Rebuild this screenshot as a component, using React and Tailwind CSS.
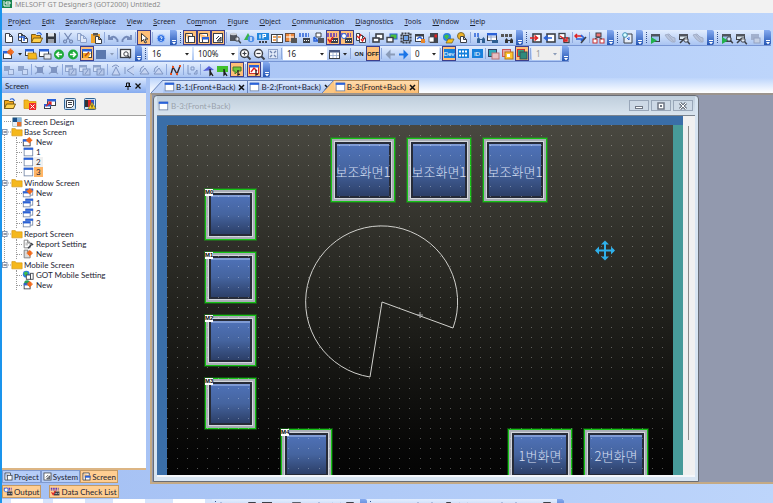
import { useState } from "react";
import clsx from "clsx";

const INK = "#3c4048";
const BLUE = "#2a62d8";
const MUTE = "#8ea3cb";

// All glyphs are drawn on a 14x14 grid
const Win = ({ x = 2, y = 3, w = 9, h = 8, c = INK, t = BLUE, f = "#fff" }) => (
  <>
    <rect x={x + 0.5} y={y + 0.5} width={w - 1} height={h - 1} fill={f} stroke={c} />
    <rect x={x} y={y} width={w} height="2.5" fill={t} />
  </>
);

const Page = ({ x = 3, y = 2, w = 8, h = 10, c = INK, f = "#fff" }) => (
  <path
    d={`M${x + 0.5} ${y + 0.5}h${w - 4}l3 3v${h - 4}h${1 - w}z M${x + w - 3.5} ${y + 0.5}v3h3`}
    fill={f}
    stroke={c}
  />
);

const Star = ({ x = 9, y = 4 }) => (
  <path
    d={`M${x} ${y - 3.5}V${y + 3.5}M${x - 3.5} ${y}H${x + 3.5}M${x - 2} ${y - 2}l4 4M${x + 2} ${y - 2}l-4 4`}
    stroke="#f26a1b"
    strokeWidth="1.6"
  />
);

const Folder = ({ y = 3 }) => (
  <path d={`M1 ${y}h4l1 1.5h7v7H1z`} fill="#f5b81c" stroke="#cf8f0c" strokeWidth=".7" />
);

const Boxes = ({ c = MUTE }) => (
  <>
    <rect x="2" y="3" width="6" height="5" fill={c} />
    <rect x="6.5" y="6.5" width="5" height="5" fill="#c9d9f6" stroke={c} />
  </>
);

const Lens = ({ x = 9, y = 8, c = INK }) => (
  <>
    <circle cx={x} cy={y} r="2.2" fill="#fff" fillOpacity=".6" stroke={c} />
    <path d={`M${x + 1.6} ${y + 1.6}l2.2 2.6`} stroke={c} strokeWidth="1.5" />
  </>
);

const Chip = ({ c = BLUE, b = INK }) => (
  <>
    <path d="M1 3h10M1 5h10" stroke={c} strokeWidth="1.5" strokeDasharray="2 1" />
    <rect x="5" y="7" width="7" height="5" fill={b} />
    <path d="M6 9.500h5" stroke="#fff" strokeDasharray="1 1" />
  </>
);

const glyphs = {
  page: <Page />,
  pageCopy: (
    <>
      <Page x={2} w={7} h={8} />
      <Page x={5} y={4} w={7} h={8} />
      <path d="M3 6h5v4" stroke={BLUE} strokeWidth="1.5" fill="none" />
    </>
  ),
  open: (
    <>
      <path d="M1.500 3.500h4l1 1h4v7h-9z" fill="#f2a91a" stroke="#7a5a16" />
      <path d="M3.500 7h9l-2 4.500h-9z" fill="#ffd24c" stroke="#7a5a16" />
      <path d="M7 2.500q3-2 4.500 1.500" stroke={BLUE} fill="none" strokeWidth="1.2" />
    </>
  ),
  save: (
    <>
      <path d="M2 2h9l1 1v9H2z" fill="#343941" />
      <rect x="4" y="2" width="6" height="3.500" fill="#dfe3e8" />
      <rect x="4" y="8" width="6" height="4" fill="#9ba0a8" />
    </>
  ),
  cut: (
    <path
      d="M3.500 2l5 7M10.500 2l-5 7M4 9a1.500 1.500 0 1 0 .1 0M10 9a1.500 1.500 0 1 0 .1 0"
      stroke="#6f83ae"
      strokeWidth="1.2"
      fill="none"
    />
  ),
  copy: (
    <>
      <Page x={2} w={7} h={8} c={MUTE} f="#dfe8f8" />
      <Page x={5} y={4} w={7} h={8} c={MUTE} f="#dfe8f8" />
    </>
  ),
  paste: (
    <>
      <rect x="2" y="3" width="9" height="9" fill="#f0a52c" />
      <rect x="4" y="2" width="5" height="2.500" fill="#555" />
      <Page x={6} y={5} w={7} h={8} />
    </>
  ),
  undo: <path d="M3 4v4h4M3.500 8q4-5 8 1v2" stroke="#7389b8" strokeWidth="1.800" fill="none" />,
  redo: <path d="M11 4v4H7M10.500 8q-4-5-8 1v2" stroke="#7389b8" strokeWidth="1.800" fill="none" />,
  pointer: <path d="M4.500 2.500v8l2-2 1.500 3.500 1.500-.6L8 8h2.800z" fill="#fff" stroke="#333" />,
  help: (
    <>
      <circle cx="7" cy="7.500" r="4" fill="#2e6fe0" stroke="#a9c8ff" />
      <path d="M5.800 6.500q1.200-1.800 2.400 0 0 1-1.200 1.500M7 9v1" stroke="#fff" fill="none" />
    </>
  ),
  frameA: (
    <>
      <path d="M2.500 2.500h7v3M2.500 2.500v9h3" stroke={INK} fill="#fff" />
      <rect x="5.500" y="5.500" width="6" height="6" fill="#fff" stroke={INK} />
    </>
  ),
  frameB: (
    <>
      <path d="M2.500 2.500h8v3M2.500 2.500v9h3" stroke={INK} fill="#fff" />
      <Win x={5} y={6} w={7} h={6} />
    </>
  ),
  frameC: (
    <>
      <rect x="2.500" y="2.500" width="9" height="9" fill="#fff" stroke={INK} />
      <path d="M5 8l3-3M6 10l4-4v4z" stroke={INK} fill="#999" />
    </>
  ),
  dataFind: (
    <>
      <path d="M2 3h7v7H2z" fill="#50555e" />
      <ellipse cx="5.500" cy="3" rx="3.500" ry="1.200" fill="#c9ced6" />
      <Lens />
    </>
  ),
  shapesFind: (
    <>
      <path d="M2 9l4-7 4 7z" fill="#37b34a" />
      <circle cx="9" cy="8" r="3.300" fill="#4f8fe8" />
      <path d="M9 6v4" stroke="#fff" strokeWidth="1.200" />
    </>
  ),
  ip: (
    <>
      <rect x="1" y="2" width="12" height="7" fill="#1f86dd" />
      <path d="M4 3.500v4M7 7.500v-4h2.500v2H7" stroke="#fff" strokeWidth="1.200" fill="none" />
      <path d="M3 11h8" stroke={INK} strokeWidth="2" strokeDasharray="2 1" />
    </>
  ),
  book: (
    <>
      <rect x="1.500" y="3.500" width="11" height="8" fill="#fff" stroke={INK} />
      <path d="M7 3v9" stroke={INK} />
      <path d="M3 6h3M8 6h3M3 9h3" stroke="#e8862a" strokeWidth="1.500" />
    </>
  ),
  bookRed: (
    <>
      <rect x="1.500" y="2.500" width="9" height="8" fill="#f08a3c" stroke="#71513d" />
      <path d="M6 3v8M2 6h8" stroke="#fff" />
      <rect x="7" y="7" width="6" height="5" fill="#555" />
    </>
  ),
  chip: <Chip />,
  folderLink: (
    <>
      <path d="M4 2h5v4H4z" fill="#fff" stroke={INK} />
      <path d="M2 6l4 4M2 6v4h4" stroke={BLUE} strokeWidth="1.500" />
      <rect x="6" y="7" width="6" height="5" fill="#50555e" />
    </>
  ),
  chipCheck: (
    <>
      <Chip c="#5a35c0" />
      <path d="M2 8l2 3 3-5" stroke="#e02222" strokeWidth="1.500" fill="none" />
    </>
  ),
  chipRing: (
    <>
      <Chip c="#5a35c0" />
      <circle cx="4" cy="5" r="2.500" fill="#fff" stroke={BLUE} />
    </>
  ),
  pageCheck: (
    <>
      <Page x={2} w={7} h={8} />
      <Page x={5} y={4} w={7} h={8} />
      <path d="M3 5l2 2 2-4M7 8l1.500 2 2.500-4" stroke="#e02222" strokeWidth="1.300" fill="none" />
    </>
  ),
  front: (
    <>
      <rect x="5" y="3" width="7" height="5" fill="#fff" stroke={INK} strokeWidth="1.600" />
      <rect x="2" y="7" width="6" height="4" fill="#fff" stroke={INK} strokeWidth="1.600" />
    </>
  ),
  frontGreen: (
    <>
      <rect x="5" y="3" width="7" height="5" fill="#4bbf3e" stroke={BLUE} />
      <rect x="2" y="6.500" width="6" height="4.500" fill="#fff" stroke={INK} strokeWidth="1.400" />
    </>
  ),
  select: (
    <>
      <rect x="2.500" y="2.500" width="9" height="9" stroke={INK} strokeWidth="2.200" fill="none" strokeDasharray="2 1" />
      <rect x="4.500" y="4.500" width="5" height="5" fill="#6fa2e8" stroke={INK} />
    </>
  ),
  winFind: (
    <>
      <Win t={INK} />
      <path d="M4 8l3-2 5 5" stroke={BLUE} strokeWidth="1.500" />
      <rect x="8" y="8" width="4" height="4" fill="#e8862a" />
    </>
  ),
  panel: (
    <>
      <rect x="3" y="2" width="8" height="10" fill="#41464f" />
      <rect x="2" y="6" width="5" height="5" fill="#fff" stroke={INK} strokeWidth=".7" />
      <rect x="7.500" y="3.500" width="2.500" height="3" fill="#e02222" />
    </>
  ),
  globe: (
    <>
      <circle cx="6" cy="6" r="4" fill="#2b7fe0" />
      <path d="M3 5q3-3 5 0-2 4-3 3z" fill="#3fbf4a" />
      <path d="M7 8h6l-2 4H5z" fill="#f5c21c" stroke="#6b5a1c" strokeWidth=".7" />
    </>
  ),
  globeDoc: (
    <>
      <circle cx="6" cy="5" r="3.500" fill="#efb326" stroke="#7e6a33" />
      <Page x={5} y={5} w={7} h={7} />
    </>
  ),
  binoBlue: (
    <>
      <path d="M2 3h6M2 5h5" stroke={BLUE} strokeWidth="1.500" strokeDasharray="2 1" />
      <path d="M5 12V8l1.500-2L8 8h2l1.500-2L13 8v4h-3V9H8v3z" fill="#2f5f92" />
    </>
  ),
  gridFind: (
    <>
      <Win x={1} y={2} w={10} h={8} />
      <path d="M2 6h8M5 4v6" stroke={MUTE} />
      <path d="M6 12V9h6v3z" fill="#2f5f92" />
    </>
  ),
  textFind: (
    <>
      <path d="M1 3h3v3H1zM5 3h3v3H5zM9 3h3v3H9z" fill="#555" />
      <path d="M5 12V9l1.500-2L8 9h2l1.500-2L13 9v3h-3v-2H8v2z" fill="#333" />
    </>
  ),
  toGot: (
    <>
      <rect x="4" y="3" width="8" height="8" fill="#fff" stroke={INK} strokeWidth="1.600" />
      <path d="M1 7h7M5.500 4.500L8.500 7l-3 2.500" stroke="#e02222" strokeWidth="1.600" fill="none" />
    </>
  ),
  fromGot: (
    <>
      <rect x="4" y="3" width="8" height="8" fill="#fff" stroke={INK} strokeWidth="1.600" />
      <path d="M9 7H2M4.500 4.500L1.500 7l3 2.500" stroke={BLUE} strokeWidth="1.600" fill="none" />
    </>
  ),
  verify: (
    <>
      <rect x="2" y="2.500" width="6" height="5" fill="#fff" stroke={INK} strokeWidth="1.300" />
      <rect x="7" y="7" width="5" height="4.500" fill="#fff" stroke={INK} strokeWidth="1.300" />
      <path d="M3 5l7 5M10 6v4H6" stroke="#e02222" strokeWidth="1.500" fill="none" />
    </>
  ),
  comSet: (
    <>
      <path d="M1 5h7M3 3L1 5l2 2" stroke="#e02222" strokeWidth="1.500" fill="none" />
      <path d="M2 8h7M7 4l3 3-3 3" stroke={BLUE} strokeWidth="1.600" fill="none" />
      <path d="M7 12l5-6" stroke={INK} strokeWidth="1.500" />
    </>
  ),
  network: (
    <>
      <rect x="5" y="2" width="5" height="4" fill="#ef7474" stroke={INK} />
      <rect x="2" y="8" width="4" height="4" fill="#fff" stroke="#c33" />
      <rect x="9" y="8" width="4" height="4" fill="#fff" stroke="#c33" />
      <path d="M4 8l3-2 4 2" stroke={INK} fill="none" />
    </>
  ),
  docLink: (
    <>
      <path d="M4 3h8v9H4z" fill="#e6edf8" stroke={INK} />
      <circle cx="5" cy="4" r="2.300" stroke="#3c8fb8" fill="#dff" />
      <path d="M7 7l2 2v-3" stroke={BLUE} fill="none" />
    </>
  ),
  simStart: (
    <>
      <Win t="#50555e" f="#9cc3ee" />
      <path d="M2 6l6 3.500-6 3.500z" fill="#22b14c" />
    </>
  ),
  simMute: <path d="M2 4l4-1 3 3 3 1v4H9L5 8z M5 4l6 7" fill="#b8c4dc" stroke="#a2aec8" />,
  simTool: (
    <>
      <Win t="#50555e" h={6} f="#dce8ef" />
      <path d="M3 12l5-5" stroke={INK} strokeWidth="1.600" />
      <Lens x={9} y={9} />
    </>
  ),
  simStartLens: (
    <>
      <Win t="#50555e" f="#9cc3ee" />
      <path d="M2 6l6 3.500-6 3.500z" fill="#22b14c" />
      <Lens x={9} y={8} />
    </>
  ),
  simGrey: (
    <>
      <rect x="3" y="3" width="8" height="6" fill="#a2b0cd" />
      <rect x="6" y="7" width="6" height="5" fill="#c4cfe4" stroke="#93a2c2" />
    </>
  ),
  newWin: (
    <>
      <Win x={1} y={4} w={9} h={8} />
      <Star x={8.5} y={5} />
    </>
  ),
  openWin: (
    <>
      <Win x={1} y={2} w={9} h={7} />
      <path d="M4 6h8l1 6H4z" fill="#f5b81c" stroke="#a3731a" strokeWidth=".7" />
    </>
  ),
  winKeys: (
    <>
      <Win x={1} y={2} w={10} h={8} />
      <rect x="6" y="7" width="7" height="5" fill="#e3e8f0" stroke={INK} strokeWidth=".8" />
    </>
  ),
  back: (
    <>
      <circle cx="7" cy="7.500" r="5" fill="#1faa3c" />
      <path d="M10 7.500H5M7 5L4.500 7.500 7 10" stroke="#fff" strokeWidth="1.500" fill="none" />
    </>
  ),
  forward: (
    <>
      <circle cx="7" cy="7.500" r="5" fill="#1faa3c" />
      <path d="M4 7.500h5M7 5l2.500 2.500L7 10" stroke="#fff" strokeWidth="1.500" fill="none" />
    </>
  ),
  editWin: (
    <>
      <Win x={2} y={2} w={10} h={9} />
      <path d="M3 6h8l-3 5H3z" fill="#f5a623" />
      <path d="M5 9l4-4" stroke="#b1401b" strokeWidth="1.500" />
    </>
  ),
  square: <rect x="2" y="3" width="10" height="9" fill="#5b78ae" />,
  preview: (
    <>
      <rect x="1.500" y="2.500" width="10" height="8" fill="#fff" stroke={INK} strokeWidth="1.300" />
      <Lens x={7} y={7} />
    </>
  ),
  zoomIn: (
    <>
      <circle cx="6.500" cy="6.500" r="4" fill="#fff" stroke={INK} strokeWidth="1.400" />
      <path d="M9.500 9.500l3 3" stroke={INK} strokeWidth="2" />
      <path d="M4.500 6.500h4M6.500 4.500v4" stroke={INK} strokeWidth="1.200" />
    </>
  ),
  zoomOut: (
    <>
      <circle cx="6.500" cy="6.500" r="4" fill="#fff" stroke={INK} strokeWidth="1.400" />
      <path d="M9.500 9.500l3 3" stroke={INK} strokeWidth="2" />
      <path d="M4.500 6.500h4" stroke={INK} strokeWidth="1.200" />
    </>
  ),
  fit: (
    <>
      <rect x="2.500" y="2.500" width="9" height="9" fill="#dfe8f8" stroke={MUTE} />
      <path d="M4 4l2 2M10 4L8 6M4 10l2-2M10 10L8 8" stroke="#6f83ae" strokeWidth="1.300" />
    </>
  ),
  table: (
    <>
      <rect x="2.500" y="3.500" width="10" height="8" fill="#fff" stroke={INK} />
      <rect x="2" y="3" width="11" height="2.500" fill="#4a5a84" />
      <path d="M6 5v6M9.500 5v6M3 8.500h9" stroke={MUTE} strokeWidth=".7" />
    </>
  ),
  left: <path d="M12 7.500H7M6.500 5L4 7.500 6.500 10z" stroke="#8a9bb8" strokeWidth="2" fill="#8a9bb8" />,
  right: <path d="M2 7.500h6M7.500 5L10 7.500 7.500 10z" stroke="#1a75e8" strokeWidth="2" fill="#1a75e8" />,
  layerA: (
    <>
      <rect x="1.500" y="2.500" width="8" height="7" fill="#2fa8b8" stroke="#346" />
      <rect x="5" y="6" width="7" height="6" fill="#e8c0c4" stroke="#b77" />
    </>
  ),
  layerB: (
    <>
      <rect x="1.500" y="2.500" width="8" height="7" fill="#e8a8a8" stroke="#c55" />
      <rect x="4" y="5" width="8" height="7" fill="#ffc62e" stroke="#b77a1a" />
      <rect x="6" y="7" width="3" height="3" fill="#fff" />
    </>
  ),
  layerC: (
    <>
      <rect x="2.500" y="2.500" width="7" height="7" fill="#3d9a7c" stroke="#c33" />
      <rect x="5" y="5" width="7" height="7" fill="#2f8a7c" stroke="#355" />
    </>
  ),
  boxes: <Boxes />,
  group: (
    <>
      <path d="M2 3l9 8M11 3l-9 8" stroke={MUTE} strokeWidth="1.200" />
      <rect x="4" y="4" width="6" height="6" fill="#7f95c2" />
    </>
  ),
  stack: (
    <>
      <Win x={1} y={2} w={8} h={7} c={MUTE} t={MUTE} f="#d7e3f8" />
      <rect x="5" y="6" width="7" height="6" fill="#b7c9ea" stroke="#7f95c2" />
      <path d="M7 11l3-4" stroke="#7f95c2" />
    </>
  ),
  rotate: <path d="M7 4l4 8H3zM3 4q4-4 7 0" stroke="#7f95c2" fill="#c5d4f2" />,
  flip: <path d="M11 3L4 7.500l7 4.500M2 4v7" stroke="#7f95c2" fill="#c5d4f2" />,
  tri: <path d="M3 11h9L8 5zM3 9q0-5 4-6" stroke="#7f95c2" fill="#c5d4f2" />,
  nodes: (
    <>
      <path d="M3 11L5 4l4 7 3-8" stroke="#3a2a2a" strokeWidth="1.400" fill="none" />
      <path d="M2 10h2v2H2zM4 3h2v2H4zM8 10h2v2H8zM11 2h2v2h-2z" fill="#e8501e" />
    </>
  ),
  align: <path d="M3 2v9h3M6 4h3v3H6zM9 11l3-4v4z" stroke="#7f95c2" fill="none" />,
  polyPick: (
    <>
      <path d="M1 8l6-5 5 4z" fill="#5560d8" />
      <path d="M8 6v6l1.500-1.500L11 13" stroke="#222" strokeWidth="1.300" fill="#222" />
    </>
  ),
  rectPick: (
    <>
      <rect x="1" y="3" width="11" height="6" fill="#41c02c" />
      <path d="M8 6v6l1.500-1.500L11 13" stroke="#222" strokeWidth="1.300" fill="#222" />
    </>
  ),
  blobPick: (
    <>
      <path d="M3 4h8v4H8l-3 3V8H3z" fill="#6fc83c" stroke="#4a7a2c" />
      <path d="M8 7v5l2-1" stroke="#222" strokeWidth="1.300" />
    </>
  ),
  winPick: (
    <>
      <Win x={2} y={2} w={10} h={9} c="#c33" />
      <path d="M4 9l3-4 3 3" stroke="#e02222" strokeWidth="1.400" fill="none" />
      <path d="M9 7v5l2-1" stroke="#222" strokeWidth="1.300" />
    </>
  ),
  folder: <Folder />,
  folderDel: (
    <>
      <Folder />
      <rect x="6" y="6" width="7" height="7" fill="#ee2a2a" />
      <path d="M7.500 7.500l4 4M11.500 7.500l-4 4" stroke="#fff" />
    </>
  ),
  winOut: (
    <>
      <Win x={4} y={2} w={9} h={7} />
      <Win x={1} y={7} w={7} h={5} />
      <path d="M3 9l5-4M5 5h3v3" stroke="#e02222" strokeWidth="1.200" fill="none" />
    </>
  ),
  list: (
    <>
      <rect x="1.500" y="1.500" width="11" height="11" rx="1" fill="#cfe2f5" stroke="#2f6496" />
      <path d="M3.500 3.500h7v5l-2 2h-5z" fill="#fff" stroke={INK} />
      <path d="M5 5.500h4M5 7.500h4" stroke={INK} />
    </>
  ),
  warn: (
    <>
      <rect x="1.500" y="1.500" width="11" height="11" rx="1" fill="#cfe2f5" stroke="#2f6496" />
      <rect x="2" y="3" width="3" height="7" fill="#333" />
      <rect x="5" y="3" width="3" height="7" fill="#e02222" />
      <rect x="8" y="3" width="3" height="4" fill="#3050d0" />
      <path d="M9 5l4 7H5z" fill="#ffd21c" stroke="#664" strokeWidth=".7" />
      <path d="M9 7.500v3" stroke="#222" />
    </>
  ),
  design: (
    <>
      <rect x="2" y="2" width="10" height="10" fill="#e8eef6" stroke="#8aa" strokeWidth=".7" />
      <rect x="2" y="2" width="5" height="5" fill="#1b4f86" />
      <rect x="7" y="2" width="5" height="5" fill="#87b6de" />
      <rect x="7" y="7" width="5" height="5" fill="#e8702a" />
    </>
  ),
  window: <Win x={2} y={2} w={11} h={10} c="#7688a8" />,
  windowStack: (
    <>
      <Win x={4} y={2} w={9} h={8} c="#7688a8" />
      <Win x={1} y={5} w={9} h={7} c="#7688a8" />
    </>
  ),
  newStack: (
    <>
      <Win x={4} y={2} w={9} h={8} c="#7688a8" />
      <Win x={1} y={5} w={9} h={7} c="#7688a8" />
      <Star x={9} y={5} />
    </>
  ),
  report: (
    <>
      <Page x={2} y={2} w={8} h={10} c="#777" />
      <path d="M4 6h4M4 8h3" stroke="#999" />
      <path d="M7 12l4-4M10 6l3 2" stroke={INK} strokeWidth="1.600" />
    </>
  ),
  newReport: (
    <>
      <Page x={2} y={2} w={8} h={10} c="#777" f="#dadada" />
      <Star x={9} y={6} />
    </>
  ),
  mobile: (
    <>
      <circle cx="5" cy="6" r="4" fill="#2b7fe0" />
      <path d="M2 5q3-4 5 0-2 4-3 3z" fill="#3fbf4a" />
      <rect x="5" y="7" width="5" height="5" fill="#fff" stroke={INK} />
      <rect x="10" y="5" width="3" height="7" fill="#fff" stroke={INK} />
    </>
  ),
  newMobile: (
    <>
      <circle cx="6" cy="5" r="3.500" fill="#2ba05a" />
      <Win x={2} y={5} w={8} h={7} />
      <Star x={9} y={6} />
    </>
  ),
};

const Icon = ({ name, className = "size-[14px]" }) => (
  <svg viewBox="0 0 14 14" fill="none" className={clsx("shrink-0", className)} aria-hidden="true">
    {glyphs[name]}
  </svg>
);

const Tool = ({ name, active, text }) => (
  <button
    aria-label={name}
    aria-pressed={active}
    className={clsx(
      "flex h-[15px] w-[14px] shrink-0 items-center justify-center",
      active && "border border-[#3d3f8c] bg-[#ffbf77]"
    )}
  >
    {text ? (
      <span className="font-['Liberation_Sans'] text-[6px] font-bold leading-none text-[#222]">
        {text}
      </span>
    ) : (
      <Icon name={name} />
    )}
  </button>
);

const DevTool = ({ label, active, lines }) => (
  <button
    aria-label={lines ? "Device names" : label}
    className={clsx(
      "flex h-[15px] w-[14px] shrink-0 items-center justify-center",
      active && "border border-[#3d3f8c] bg-[#ffbf77]"
    )}
  >
    <span className="flex h-[9px] w-[11px] items-center justify-center bg-[#1680dc] text-[6px] leading-none text-white">
      {lines ? (
        <svg viewBox="0 0 11 9" className="h-[9px] w-[11px]">
          <path d="M1 2.500h9M1 6.500h9" stroke="#fff" strokeWidth="2" strokeDasharray="2 1" />
        </svg>
      ) : (
        label
      )}
    </span>
  </button>
);

const Sep = () => <span className="mx-px h-[11px] w-px shrink-0 bg-[#8fa9dc]" />;

const Grip = () => (
  <span className="mr-[2px] ml-[3px] h-[11px] shrink-0 border-l border-dotted border-[#33518f]" />
);

const Drop = ({ muted }) => (
  <svg viewBox="0 0 8 8" className="size-[8px] shrink-0" aria-hidden="true">
    <path d="M2 3h4L4 5.500z" fill={muted ? "#8a9bb8" : "#222"} />
  </svg>
);

const Overflow = () => (
  <button
    aria-label="More buttons"
    className="ml-[2px] flex h-full w-[7px] shrink-0 items-end justify-center rounded-r-[2px] bg-gradient-to-b from-[#86abf0] to-[#2455b4]"
  >
    <svg viewBox="0 0 6 6" className="size-[6px]" aria-hidden="true">
      <path d="M1 1.500h4" stroke="#fff" />
      <path d="M1 3h4L3 5.500z" fill="#fff" />
    </svg>
  </button>
);

const Combo = ({ label, value, width, disabled }) => (
  <span
    className={clsx(
      "relative flex h-[13px] shrink-0 items-center",
      width,
      disabled ? "bg-[#eeeeee]" : "bg-white"
    )}
  >
    <select
      aria-label={label}
      disabled={disabled}
      defaultValue={value}
      className={clsx(
        "h-full w-full appearance-none pl-[4px] font-['Noto_Sans',sans-serif] text-[8px] leading-none",
        disabled ? "text-[#999]" : "text-[#222]"
      )}
    >
      <option>{value}</option>
    </select>
    <span className="pointer-events-none absolute right-px">
      <Drop muted={disabled} />
    </span>
  </span>
);

const Bar = ({ children }) => (
  <div className="flex h-[16px] shrink-0 items-center border-b border-[#7795d4] bg-gradient-to-b from-[#e2edfe] to-[#a9c4f2]">
    {children}
    <Overflow />
  </div>
);

// "|" is a separator, a leading "*" marks a pressed button
const Tools = ({ items }) =>
  items.split(" ").map((item, i) =>
    item === "|" ? (
      <Sep key={i} />
    ) : (
      <Tool key={i} name={item.replace("*", "")} active={item.startsWith("*")} />
    )
  );

const MENUS = [
  ["", "P", "roject"],
  ["", "E", "dit"],
  ["", "S", "earch/Replace"],
  ["", "V", "iew"],
  ["", "S", "creen"],
  ["Co", "m", "mon"],
  ["", "F", "igure"],
  ["", "O", "bject"],
  ["", "C", "ommunication"],
  ["", "D", "iagnostics"],
  ["", "T", "ools"],
  ["", "W", "indow"],
  ["", "H", "elp"],
];

const TREE = [
  {
    label: "Base Screen",
    items: [
      ["newWin", "New"],
      ["window", "1"],
      ["window", "2", "bg-[#f0f0f0]"],
      ["window", "3", "bg-[#ffb566]"],
    ],
  },
  {
    label: "Window Screen",
    items: [
      ["newStack", "New"],
      ["windowStack", "1"],
      ["windowStack", "2"],
      ["windowStack", "3"],
    ],
  },
  {
    label: "Report Screen",
    items: [
      ["report", "Report Setting"],
      ["newReport", "New"],
    ],
  },
  {
    label: "Mobile Screen",
    items: [
      ["mobile", "GOT Mobile Setting"],
      ["newMobile", "New"],
    ],
  },
];

const SWITCHES = [
  { x: 164, y: 13, w: 64, h: 64, text: "보조화면1" },
  { x: 240, y: 13, w: 64, h: 64, text: "보조화면1" },
  { x: 316, y: 13, w: 64, h: 64, text: "보조화면1" },
  { x: 38, y: 64, w: 51, h: 51, tag: "M0" },
  { x: 38, y: 127, w: 51, h: 51, tag: "M1" },
  { x: 38, y: 190, w: 51, h: 51, tag: "M2" },
  { x: 38, y: 253, w: 51, h: 51, tag: "M3" },
  { x: 114, y: 304, w: 51, h: 51, tag: "M4" },
  { x: 341, y: 304, w: 64, h: 51, text: "1번화면" },
  { x: 417, y: 304, w: 64, h: 51, text: "2번화면" },
];

const DOTS = Array.from({ length: 35 }, (_, r) =>
  Array.from({ length: 50 }, (_, c) => [Math.round((c * 101) / 10), Math.round((r * 101) / 10)])
).flat();

const Dots = () => (
  <svg className="pointer-events-none absolute inset-0 size-full" aria-hidden="true">
    {DOTS.map(([x, y]) => (
      <rect key={`${x}-${y}`} x={x} y={y} width="1" height="1" fill="#fff" fillOpacity=".3" />
    ))}
  </svg>
);

const Switch = ({ x, y, w, h, text, tag }) => (
  <button
    aria-label={text || tag}
    className="absolute border border-[#16c216] bg-[#a9adb6] p-[3px] shadow-[0_0_0_1px_#16c21655]"
    style={{ left: x, top: y, width: w, height: h }}
  >
    <span className="flex size-full items-center justify-center border-2 border-[#262b38] bg-gradient-to-b from-[#4f72b8] via-[#45649f] to-[#2c3f68] shadow-[0_0_0_1px_#d3d6dc]">
      <span className="flex size-full items-center justify-center border-t-2 border-[#7f9bd4] font-['Noto_Sans_CJK_KR',sans-serif] text-[13px] font-light leading-none whitespace-nowrap text-[#d6dff2]">
        {text}
      </span>
    </span>
    {tag && (
      <span className="absolute -top-px -left-px bg-white font-['Liberation_Sans'] text-[6px] font-bold leading-[7px] text-black">
        {tag}
      </span>
    )}
  </button>
);

const Drawing = () => (
  <div className="relative min-w-0 flex-1 overflow-hidden bg-gradient-to-b from-[#494840] via-[#23231e] to-[#040404]">
    {SWITCHES.map((s, i) => (
      <Switch key={i} {...s} />
    ))}
    <Dots />
    <svg className="pointer-events-none absolute inset-0 size-full" fill="none" aria-hidden="true">
      <path d="M215 177L203 252A76 76 0 1 1 286 203Z" stroke="#d0d0cc" />
      <path d="M253 187v6M250 190h6" stroke="#aaa" />
      <g stroke="#2fb0ea" strokeWidth="2">
        <path d="M438 117v17M430 125.500h17" />
        <path
          d="M438 115.500l-4 4h8zM438 135.500l-4-4h8zM428 125.500l4-4v8zM448 125.500l-4-4v8z"
          fill="#2fb0ea"
          stroke="none"
        />
      </g>
    </svg>
  </div>
);

const WinButton = ({ label, children }) => (
  <button
    aria-label={label}
    className="flex h-[11px] w-[20px] items-center justify-center border border-[#98a6b8] bg-[#cdd9e6]"
  >
    <svg viewBox="0 0 14 10" className="h-[10px] w-[14px]" aria-hidden="true">
      {children}
    </svg>
  </button>
);

const ChildWindow = () => (
  <section className="flex h-full w-[88%] flex-col rounded-t-[4px] border border-[#686d76] bg-[#d7e4f1] px-[3px]">
    <header className="flex h-[19px] shrink-0 items-center gap-[2px] bg-gradient-to-b from-[#bfcedc] to-[#d9e4ee] pr-[2px]">
      <Icon name="window" className="size-[12px]" />
      <h2 className="flex-1 text-[#9aa2ac]">B-3:(Front+Back)</h2>
      <WinButton label="Minimize">
        <rect x="3.500" y="5.500" width="7" height="2" fill="#fff" stroke="#6e7684" />
      </WinButton>
      <WinButton label="Restore">
        <rect x="4" y="2" width="6" height="6" fill="#fff" stroke="#6e7684" strokeWidth="1.500" />
        <rect x="6" y="4" width="2" height="2" fill="#6e7684" />
      </WinButton>
      <WinButton label="Close">
        <path d="M4 2l6 6M10 2L4 8" stroke="#6e7684" strokeWidth="3" />
        <path d="M4 2l6 6M10 2L4 8" stroke="#fff" />
      </WinButton>
    </header>
    <div className="mb-[4px] flex min-h-0 flex-1 border-b-2 border-b-[#f5f7fa] bg-[#f0f0f0]">
      <div className="flex min-w-0 flex-1 flex-col border-t border-[#7b848f] bg-[#3a6ea8] pt-[9px] pl-[10px]">
        <div className="flex min-h-0 flex-1">
          <Drawing />
          <div className="w-[10px] shrink-0 bg-[#479a99]" />
        </div>
      </div>
      <div className="flex w-[12px] shrink-0 justify-center border-t border-[#7b848f] pt-[10px] pb-[35px]">
        <div className="w-px bg-[#8c8c8c]" />
      </div>
    </div>
  </section>
);

const DOCS = ["B-1:(Front+Back)", "B-2:(Front+Back)", "B-3:(Front+Back)"];

const DocTab = ({ label, active, slanted, onSelect }) => (
  <div
    className={clsx(
      "relative flex h-[13px] items-center gap-[3px] border-t border-r pr-[2px]",
      active
        ? "z-10 border-[#b38a55] bg-gradient-to-b from-[#ffdcae] to-[#fdbd70]"
        : "border-[#6682ba] bg-gradient-to-b from-[#dbe7fc] to-[#a9c5f5]"
    )}
  >
    {slanted && (
      <svg viewBox="0 0 12 13" className="absolute -top-px right-full h-[13px] w-[12px]" aria-hidden="true">
        <path d="M0 13L12 0v13z" fill={active ? "#fdc780" : "#c0d4f8"} />
        <path d="M0 13L12 0" stroke="#6682ba" />
      </svg>
    )}
    <button
      role="tab"
      aria-selected={active}
      onClick={onSelect}
      className="flex items-center gap-px whitespace-nowrap"
    >
      <Icon name="window" className="size-[12px]" />
      {label}
    </button>
    <button aria-label={`Close ${label}`} className="flex items-center">
      <svg viewBox="0 0 7 7" className="size-[7px]" aria-hidden="true">
        <path d="M1 1l5 5M6 1L1 6" stroke="#111" strokeWidth="1.500" />
      </svg>
    </button>
  </div>
);

const PanelTab = ({ icon, label, active }) => (
  <button
    className={clsx(
      "flex h-[13px] items-center border pr-px whitespace-nowrap",
      active ? "border-[#c59a63] bg-[#ffce92]" : "border-[#7f9ad0] bg-[#b5cdf8]"
    )}
  >
    <Icon name={icon} className="size-[11px]" />
    {label}
  </button>
);

const ScreenPanel = () => (
  <aside className="flex w-[144px] shrink-0 flex-col">
    <header className="flex h-[15px] shrink-0 items-center bg-gradient-to-b from-[#dae7fd] to-[#86abef] pr-[4px] pl-[3px]">
      <h2 className="flex-1">Screen</h2>
      <button aria-label="Pin panel">
        <svg viewBox="0 0 8 8" className="size-[8px]" fill="none" aria-hidden="true">
          <path d="M2.500 1h3v3.500h-3zM1 4.500h6M4 4.500V8M5 1v3" stroke="#111" />
        </svg>
      </button>
      <button aria-label="Close panel" className="ml-[2px]">
        <svg viewBox="0 0 8 8" className="size-[8px]" aria-hidden="true">
          <path d="M1.500 1.500l5 5M6.500 1.500l-5 5" stroke="#111" strokeWidth="1.300" />
        </svg>
      </button>
    </header>
    <div className="flex h-[23px] shrink-0 items-center gap-[6px] border-b border-[#a0a0a0] bg-[#f0f0f0] pl-px">
      {["open", "folderDel", "winOut", "list", "warn"].map((name) => (
        <button key={name} aria-label={name}>
          <Icon name={name} />
        </button>
      ))}
    </div>
    <nav className="min-h-0 flex-1 overflow-hidden bg-white leading-[10px]">
      <div className="flex h-[11px] items-center pl-[2px]">
        <span className="h-px w-[7px] border-t border-dotted border-[#999]" />
        <Icon name="design" className="size-[12px]" />
        <span className="pl-px">Screen Design</span>
      </div>
      <ul className="flex flex-col gap-px">
        {TREE.map((group, i) => (
          <li key={group.label} className="relative">
            {i < TREE.length - 1 && (
              <span className="absolute top-[8px] -bottom-[3px] left-[2px] border-l border-dotted border-[#999]" />
            )}
            <div className="flex h-[10px] items-center">
              <svg viewBox="0 0 9 8" className="h-[8px] w-[9px]" fill="none" aria-hidden="true">
                <rect x=".5" y="1.500" width="4.500" height="5" fill="#fff" stroke="#8899b5" />
                <path d="M1.500 4h3" stroke="#334" />
                <path d="M6 4h3" stroke="#999" strokeDasharray="1 1" />
              </svg>
              <Icon name="folder" className="size-[12px]" />
              <button className="pl-px">{group.label}</button>
            </div>
            <ul className="ml-[14px] border-l border-dotted border-[#999]">
              {group.items.map(([icon, label, bg]) => (
                <li key={label} className="flex h-[10px] items-center">
                  <span className="w-[5px] border-t border-dotted border-[#999]" />
                  <Icon name={icon} className="size-[12px]" />
                  <button className={clsx("px-[2px] whitespace-nowrap", bg)}>{label}</button>
                </li>
              ))}
            </ul>
          </li>
        ))}
      </ul>
    </nav>
    <div className="flex shrink-0 items-start border-t-2 border-[#dcb584] pb-px">
      <PanelTab icon="frameA" label="Project" />
      <PanelTab icon="frameC" label="System" />
      <PanelTab icon="frameB" label="Screen" active />
    </div>
  </aside>
);

const App = () => {
  const [doc, setDoc] = useState(DOCS[2]);

  return (
    <div className="flex h-screen flex-col overflow-hidden border-l-2 border-[#1a94ec] bg-gradient-to-r from-[#a3bff3] to-[#bdd5fb] font-[Lato,sans-serif] text-[8px] leading-none text-[#1d2433]">
      <header className="flex h-[13px] shrink-0 items-start gap-[3px] bg-[#f2f2f2]">
        <svg viewBox="0 0 10 9" className="h-[9px] w-[10px]" aria-hidden="true">
          <rect width="10" height="8" fill="#19864e" />
          <path d="M2 1v5h6M4 2h4v2H4z" stroke="#fff" fill="none" />
        </svg>
        <h1 className="font-['Noto_Sans',sans-serif] text-[7px] leading-[9px] text-[#8a8a8a]">
          MELSOFT GT Designer3 (GOT2000) Untitled2
        </h1>
      </header>

      <nav className="flex h-[17px] shrink-0 items-center gap-[11px] pl-[6px] font-['Noto_Sans',sans-serif] text-[7px]">
        {MENUS.map(([pre, key, post]) => (
          <button key={key + post} className="whitespace-nowrap">
            {pre}
            <u>{key}</u>
            {post}
          </button>
        ))}
      </nav>

      <div className="flex shrink-0">
        <Bar>
          <Tools items="page pageCopy open save | cut copy paste | undo redo | *pointer | help" />
        </Bar>
        <Bar>
          <Grip />
          <Tools items="*frameA *frameB *frameC | dataFind shapesFind ip book bookRed chip folderLink *chipCheck *chipRing pageCheck | front frontGreen select winFind panel globe globeDoc | binoBlue gridFind textFind" />
        </Bar>
        <Bar>
          <Grip />
          <Tools items="toGot fromGot verify | comSet | network" />
        </Bar>
        <Bar>
          <Grip />
          <Tools items="docLink" />
        </Bar>
        <Bar>
          <Grip />
          <Tools items="simStart simMute simTool simMute" />
        </Bar>
        <Bar>
          <Grip />
          <Tools items="simStartLens simTool simGrey" />
        </Bar>
      </div>

      <div className="flex shrink-0">
        <Bar>
          <Tools items="newWin" />
          <Drop />
          <Tools items="openWin winKeys back forward *editWin square" />
          <Drop muted />
          <Sep />
          <Tools items="preview" />
        </Bar>
        <Bar>
          <Grip />
          <Combo label="Grid width" value="16" width="w-[44px]" />
          <span className="w-[2px]" />
          <Combo label="Zoom" value="100%" width="w-[44px]" />
          <Tools items="zoomIn zoomOut fit |" />
          <Combo label="Grid height" value="16" width="w-[44px]" />
          <Tools items="table" />
          <Drop />
          <Sep />
          <Tool name="on" text="ON" />
          <Tool name="off" text="OFF" active />
          <Sep />
          <Tools items="left right" />
          <Combo label="State" value="0" width="w-[28px]" />
          <Sep />
          <DevTool label="Dev" active />
          <DevTool lines />
          <DevTool label="ID" />
          <Tools items="| layerA layerB *layerC |" />
          <Combo label="Layer" value="1" width="w-[28px]" disabled />
        </Bar>
      </div>

      <div className="flex shrink-0">
        <Bar>
          <Tools items="boxes boxes | group group | stack stack stack | rotate flip tri tri | nodes | align | polyPick rectPick *blobPick | *winPick" />
        </Bar>
      </div>

      <main className="flex min-h-0 flex-1 gap-[4px]">
        <ScreenPanel />
        <div className="flex min-w-0 flex-1 flex-col">
          <div
            role="tablist"
            className="flex h-[15px] shrink-0 items-end bg-gradient-to-b from-[#bdd5fb] to-white pl-[13px]"
          >
            {DOCS.map((label, i) => (
              <DocTab
                key={label}
                label={label}
                active={doc === label}
                slanted={i === 0 || doc === label}
                onSelect={() => setDoc(label)}
              />
            ))}
          </div>
          <div className="min-h-0 flex-1 border-2 border-r-0 border-[#c4aa86] border-t-[#9b948e] bg-[#9299ae] pl-px">
            <ChildWindow />
          </div>
        </div>
      </main>

      <div className="flex h-[15px] shrink-0 items-center gap-[8px]">
        <PanelTab icon="chipRing" label="Output" active />
        <PanelTab icon="chipCheck" label="Data Check List" active />
      </div>

      <div className="flex h-[4px] shrink-0 items-start overflow-hidden">
        <div className="flex w-[210px] gap-[10px] bg-[#d6e4fc] pl-[9px]">
          <Combo label="X" value="" width="w-[32px]" />
          <Combo label="Y" value="" width="w-[32px]" />
          <span className="w-[8px]" />
          <Combo label="Width" value="" width="w-[32px]" />
          <span className="w-[8px]" />
          <Combo label="Height" value="" width="w-[32px]" />
        </div>
        <Bar>
          <Grip />
          <Tools items="align boxes frameA frameC table front boxes align group frameA" />
        </Bar>
        <Bar>
          <Grip />
          <Tools items="table table boxes align align page group boxes table align align boxes frameA" />
        </Bar>
      </div>
    </div>
  );
};

export default App;
